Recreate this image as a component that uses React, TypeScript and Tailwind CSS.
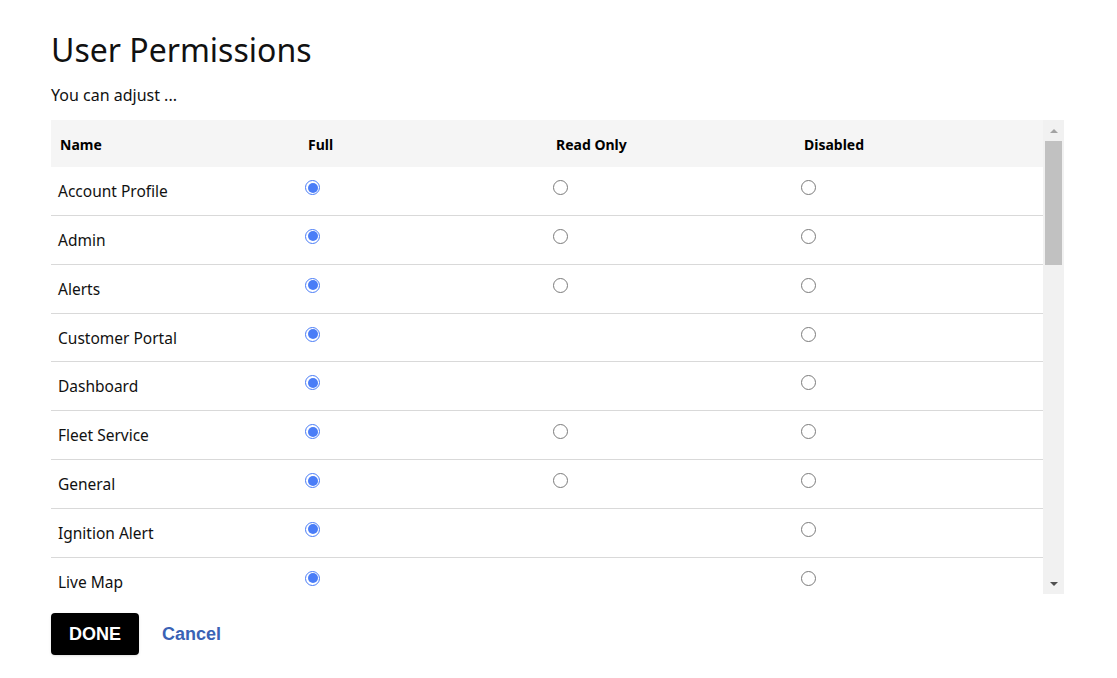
import React from 'react';

type Level = 'full' | 'read' | 'disabled';

interface PermissionRow {
  name: string;
  readOnly: boolean;
  value: Level;
}

const ROWS: PermissionRow[] = [
  { name: 'Account Profile', readOnly: true, value: 'full' },
  { name: 'Admin', readOnly: true, value: 'full' },
  { name: 'Alerts', readOnly: true, value: 'full' },
  { name: 'Customer Portal', readOnly: false, value: 'full' },
  { name: 'Dashboard', readOnly: false, value: 'full' },
  { name: 'Fleet Service', readOnly: true, value: 'full' },
  { name: 'General', readOnly: true, value: 'full' },
  { name: 'Ignition Alert', readOnly: false, value: 'full' },
  { name: 'Live Map', readOnly: false, value: 'full' },
  { name: 'Maintenance', readOnly: true, value: 'full' },
];

function Radio({ checked }: { checked: boolean }) {
  return checked ? (
    <span className="flex h-[15px] w-[15px] items-center justify-center rounded-full border border-[#4a7df7] bg-white">
      <span className="h-[10px] w-[10px] rounded-full bg-[#4a7df7]" />
    </span>
  ) : (
    <span className="block h-[15px] w-[15px] rounded-full border border-[#7b7b7b] bg-white" />
  );
}

function HeaderCell({ children }: { children: React.ReactNode }) {
  return (
    <div className="w-[248px] pl-[9px] pt-[15px] text-[14px] leading-[20px] font-bold text-black">{children}</div>
  );
}

function Scrollbar() {
  return (
    <div className="flex w-[21px] flex-col items-center bg-[#f1f1f1]">
      <div className="flex h-[21px] items-center justify-center">
        <span className="h-0 w-0 border-x-[4px] border-b-[4px] border-x-transparent border-b-[#a3a3a3]" />
      </div>
      <div className="h-[124px] w-[17px] bg-[#c1c1c1]" />
      <div className="flex-1" />
      <div className="flex h-[21px] items-center justify-center">
        <span className="h-0 w-0 border-x-[4px] border-t-[4px] border-x-transparent border-t-[#505050]" />
      </div>
    </div>
  );
}

export default function App() {
  return (
    <div className="min-h-screen bg-white px-[51px] pt-[30px] font-['Noto_Sans',sans-serif] text-black">
      <h1 className="text-[32px] leading-[40px] text-[#111]">User Permissions</h1>
      <p className="mt-[13px] text-[16px] leading-[24px] text-[#111]">You can adjust ...</p>

      <div className="mt-[13px] flex h-[474px] w-[1013px]">
        <div className="flex-1 overflow-hidden">
          <div className="flex h-[47px] bg-[#f5f5f5]">
            <HeaderCell>Name</HeaderCell>
            <HeaderCell>Full</HeaderCell>
            <HeaderCell>Read Only</HeaderCell>
            <HeaderCell>Disabled</HeaderCell>
          </div>
          {ROWS.map((row) => (
            <div key={row.name} className="flex h-[48.85px] border-b border-[#d9d9d9]">
              <div className="w-[248px] pl-[7px] pt-[12px] text-[15.5px] leading-[24px] text-[#111]">{row.name}</div>
              <div className="w-[248px] pl-[6px] pt-[13px]">
                <Radio checked={row.value === 'full'} />
              </div>
              <div className="w-[248px] pl-[6px] pt-[13px]">
                {row.readOnly ? <Radio checked={row.value === 'read'} /> : null}
              </div>
              <div className="w-[248px] pl-[6px] pt-[13px]">
                <Radio checked={row.value === 'disabled'} />
              </div>
            </div>
          ))}
        </div>
        <Scrollbar />
      </div>

      <div className="mt-[19px] flex items-center gap-[23px]">
        <button className="h-[42px] rounded-[4px] bg-black px-[18px] font-['Liberation_Sans',Arial,sans-serif] text-[18px] leading-[42px] font-bold text-white shadow-sm">
          DONE
        </button>
        <button className="font-['Liberation_Sans',Arial,sans-serif] text-[18px] leading-[22px] font-bold text-[#3a62b5]">
          Cancel
        </button>
      </div>
    </div>
  );
}
